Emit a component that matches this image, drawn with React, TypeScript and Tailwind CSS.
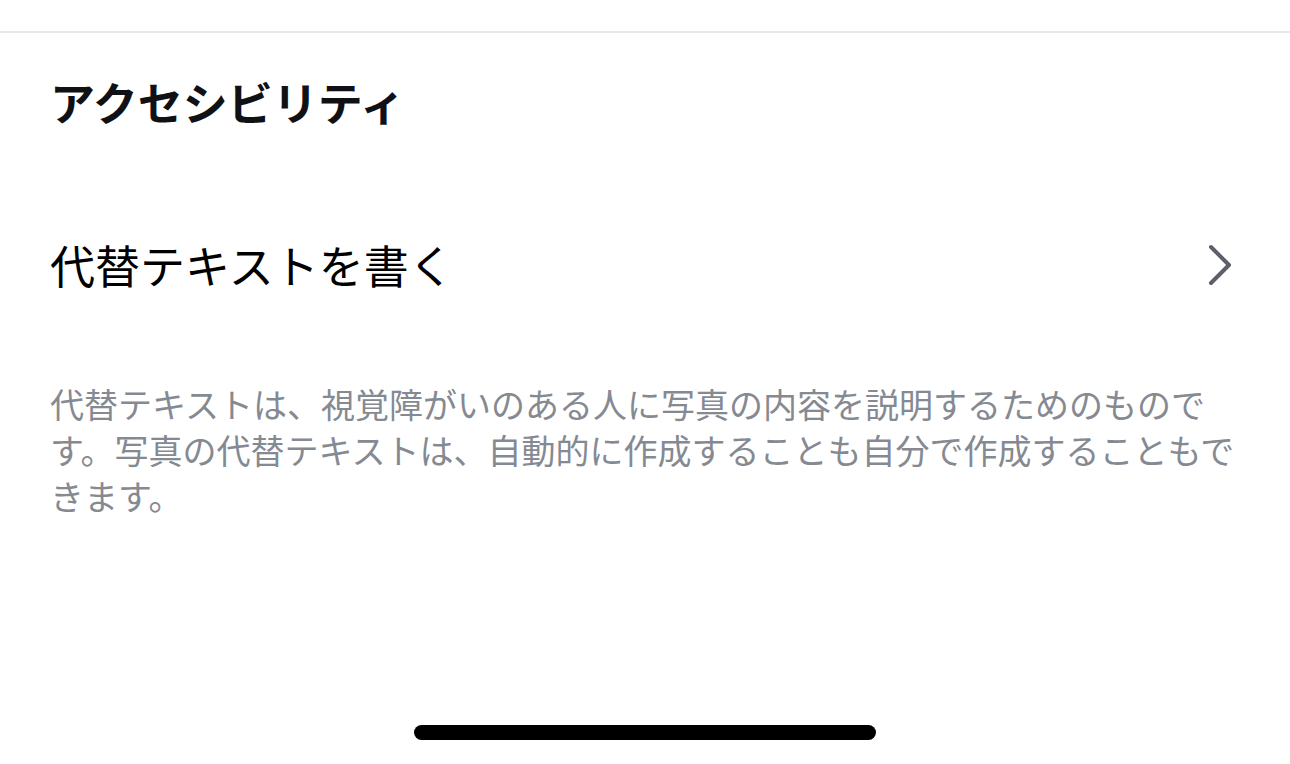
import React from 'react';

const FONT = { fontFamily: '"Noto Sans CJK JP", "Noto Sans", sans-serif' };

export default function App() {
  return (
    <div className="h-[764px] w-[1290px] bg-white flex flex-col overflow-hidden" style={FONT}>
      <div className="h-[31px] shrink-0" />
      <div className="h-[2px] bg-[#e7e8ea] shrink-0" />

      <div className="px-[50px]">
        <h1 className="mt-[39px] text-[45px] leading-[60px] font-bold text-[#0f1115]">
          アクセシビリティ
        </h1>

        <button className="mt-[103px] w-full flex items-center justify-between text-left">
          <span className="text-[45px] leading-[60px] text-black">代替テキストを書く</span>
          <svg width="30" height="46" viewBox="0 0 30 46" fill="none" className="mr-[8px]">
            <path
              d="M9 5 L27 23 L9 41"
              stroke="#5d6068"
              strokeWidth="4"
              strokeLinecap="round"
              strokeLinejoin="round"
            />
          </svg>
        </button>

        <p className="mt-[86px] text-[34px] leading-[46px] text-[#858a92]">
          代替テキストは、視覚障がいのある人に写真の内容を説明するためのものです。写真の代替テキストは、自動的に作成することも自分で作成することもできます。
        </p>
      </div>

      <div className="mt-auto mb-[24px] mx-auto w-[462px] h-[15px] rounded-full bg-black shrink-0" />
    </div>
  );
}
